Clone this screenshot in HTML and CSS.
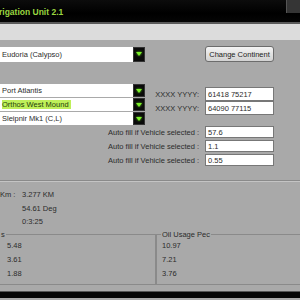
FILE: index.html
```html
<!DOCTYPE html>
<html lang="en">
<head>
  <meta charset="UTF-8" />
  <title>Navigation Unit 2.1</title>
  <link rel="stylesheet" href="styles.css">
</head>
<body>
  <div class="titlebar">
    <span class="title">rigation Unit 2.1</span>
    <span class="win-btn"></span>
  </div>
  <div class="menubar"></div>

  <div class="main">
    <div class="top-row">
      <div class="combo tall">
        <span class="combo-text">Eudoria (Calypso)</span>
        <span class="combo-btn"></span>
      </div>
      <button class="btn">Change Continent</button>
    </div>

    <div class="route">
      <div class="combos">
        <div class="combo">
          <span class="combo-text">Port Atlantis</span>
          <span class="combo-btn"></span>
        </div>
        <div class="combo">
          <span class="combo-text"><span class="hl">Orthos West Mound</span></span>
          <span class="combo-btn"></span>
        </div>
        <div class="combo">
          <span class="combo-text">Sleipnir Mk1 (C,L)</span>
          <span class="combo-btn"></span>
        </div>
      </div>
      <div class="coords">
        <div class="field"><span class="lbl">XXXX YYYY:</span><span class="box">61418 75217</span></div>
        <div class="field"><span class="lbl">XXXX YYYY:</span><span class="box">64090 77115</span></div>
      </div>
    </div>

    <div class="autofill">
      <div class="field"><span class="lbl">Auto fill if Vehicle selected :</span><span class="box">57.6</span></div>
      <div class="field"><span class="lbl">Auto fill if Vehicle selected :</span><span class="box">1.1</span></div>
      <div class="field"><span class="lbl">Auto fill if Vehicle selected :</span><span class="box">0.55</span></div>
    </div>

    <div class="stats">
      <div class="stat"><span class="stat-lbl">Km :</span><span>3.277 KM</span></div>
      <div class="stat"><span class="stat-lbl"></span><span>54.61 Deg</span></div>
      <div class="stat"><span class="stat-lbl"></span><span>0:3:25</span></div>
    </div>

    <div class="groups">
      <div class="group left">
        <span class="legend">s</span>
        <div class="val">5.48</div>
        <div class="val">3.61</div>
        <div class="val">1.88</div>
      </div>
      <div class="group right">
        <span class="legend">Oil Usage Pec</span>
        <div class="val">10.97</div>
        <div class="val">7.21</div>
        <div class="val">3.76</div>
      </div>
    </div>
  </div>

  <div class="bottom-bar"></div>
</body>
</html>
```

FILE: styles.css
```css
body {
  margin: 0;
  width: 300px;
  height: 300px;
  overflow: hidden;
  background: #a9a9a9;
  font-family: 'Liberation Sans', Arial, sans-serif;
  font-size: 7.5px;
  color: #2c2c2c;
}

.titlebar {
  height: 22px;
  background: linear-gradient(#0c0c0c, #000 60%, #050505);
  display: flex;
  justify-content: space-between;
  align-items: flex-start;
}

.title {
  margin: 7px 0 0 -1px;
  font-size: 8.5px;
  font-weight: bold;
  color: #9ad640;
}

.win-btn {
  width: 13px;
  height: 13px;
  background: #353535;
  border-left: 1px solid #555;
}

.menubar {
  height: 16px;
  background: #dcdcdc;
  border-top: 2px solid #5a5a5a;
}

.main {
  height: 251px;
  display: flex;
  flex-direction: column;
}

.top-row {
  display: flex;
  align-items: center;
  margin-top: 6px;
  height: 16px;
}

.combo {
  display: flex;
  width: 145px;
  height: 13px;
}

.combo.tall {
  height: 15px;
}

.combo-text {
  flex: 1;
  background: #fff;
  padding-left: 2px;
  display: flex;
  align-items: center;
  white-space: nowrap;
}

.combo-btn {
  width: 12px;
  background: #0a0a0a;
  border: 1px solid #333;
  box-sizing: border-box;
  display: flex;
  align-items: center;
  justify-content: center;
}

.combo-btn:after {
  content: "";
  border-left: 3px solid transparent;
  border-right: 3px solid transparent;
  border-top: 4px solid #7cf02a;
  filter: drop-shadow(0 0 1px #5fd01a);
}

.hl {
  background: #bff05a;
  color: #26400a;
  padding-right: 2px;
}

.btn {
  margin-left: 60px;
  width: 69px;
  height: 16px;
  padding: 0;
  font-family: inherit;
  font-size: 7.5px;
  color: #222;
  background: linear-gradient(#f4f4f4, #e2e2e2 50%, #d2d2d2);
  border: 1px solid #6c6c6c;
  border-radius: 3px;
}

.route {
  display: flex;
  margin-top: 22px;
  height: 41px;
}

.combos {
  display: flex;
  flex-direction: column;
  gap: 1px;
}

.coords {
  display: flex;
  flex-direction: column;
  margin-top: 3px;
}

.field {
  display: flex;
  align-items: center;
  height: 12px;
}

.coords .field {
  height: 14px;
}

.lbl {
  text-align: right;
  padding-right: 6px;
  box-sizing: border-box;
}

.coords .lbl {
  width: 60px;
}

.box {
  width: 69px;
  height: 100%;
  box-sizing: border-box;
  background: #fff;
  border: 1px solid #777;
  padding-left: 2px;
  display: flex;
  align-items: center;
}

.autofill {
  display: flex;
  flex-direction: column;
  gap: 2px;
  margin-top: 1px;
}

.autofill .lbl {
  width: 205px;
}

.stats {
  margin-top: 14px;
  border-top: 1px solid #8a8a8a;
  box-shadow: 0 1px 0 #c4c4c4 inset;
  padding-top: 7px;
}

.stat {
  display: flex;
  height: 13.5px;
  align-items: center;
}

.stat-lbl {
  width: 22px;
  flex-shrink: 0;
}

.groups {
  display: flex;
  margin-top: 5px;
}

.group {
  position: relative;
  height: 51px;
  border: 1px solid #8a8a8a;
  padding-top: 4px;
  box-sizing: border-box;
}

.group.left {
  width: 159px;
  margin-left: -3px;
  padding-left: 9px;
}

.group.right {
  flex: 1;
  margin-right: -4px;
  padding-left: 5px;
}

.legend {
  position: absolute;
  top: -5px;
  background: #a9a9a9;
  padding: 0 1px;
}

.group.left .legend {
  left: 2px;
}

.group.right .legend {
  left: 4px;
}

.val {
  height: 14px;
  display: flex;
  align-items: center;
}

.bottom-bar {
  height: 6px;
  background: #050505;
  border-top: 1px solid #555;
}
```
